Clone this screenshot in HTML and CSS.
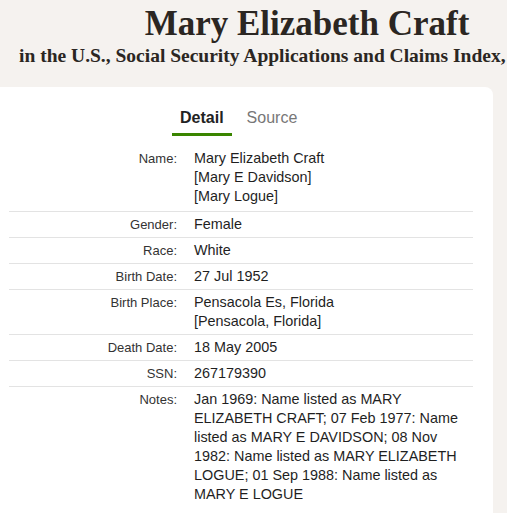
FILE: index.html
```html
<!DOCTYPE html>
<html>
<head>
<meta charset="utf-8">
<link rel="stylesheet" href="styles.css">
</head>
<body>
<div class="page">
  <header class="header">
    <h1 class="title">Mary Elizabeth Craft</h1>
    <p class="subtitle">in the U.S., Social Security Applications and Claims Index, 1936-2007</p>
  </header>
  <main class="card">
    <nav class="tabs">
      <span class="tab active">Detail</span>
      <span class="tab">Source</span>
    </nav>
    <table class="facts">
      <tr class="first"><th>Name:</th><td>Mary Elizabeth Craft<br>[Mary E Davidson]<br>[Mary Logue]</td></tr>
      <tr><th>Gender:</th><td>Female</td></tr>
      <tr><th>Race:</th><td>White</td></tr>
      <tr><th>Birth Date:</th><td>27 Jul 1952</td></tr>
      <tr><th>Birth Place:</th><td>Pensacola Es, Florida<br>[Pensacola, Florida]</td></tr>
      <tr><th>Death Date:</th><td>18 May 2005</td></tr>
      <tr><th>SSN:</th><td>267179390</td></tr>
      <tr><th>Notes:</th><td>Jan 1969: Name listed as MARY ELIZABETH CRAFT; 07 Feb 1977: Name listed as MARY E DAVIDSON; 08 Nov 1982: Name listed as MARY ELIZABETH LOGUE; 01 Sep 1988: Name listed as MARY E LOGUE</td></tr>
    </table>
  </main>
</div>
</body>
</html>
```
FILE: styles.css
```css
html, body {
  margin: 0;
  padding: 0;
  background: #f5f2ef;
  overflow: hidden;
}
.page {
  width: 507px;
  height: 513px;
  overflow: hidden;
}
.header {
  width: 614px;
  text-align: center;
  white-space: nowrap;
  color: #2b2622;
  font-family: "Liberation Serif", serif;
  padding-top: 4px;
}
.title {
  margin: 0;
  font-size: 35px;
  font-weight: bold;
  line-height: 40px;
}
.subtitle {
  margin: 0;
  font-size: 19.5px;
  font-weight: bold;
  line-height: 24px;
}
.card {
  margin-top: 19px;
  width: 493px;
  background: #fff;
  border-top-right-radius: 8px;
  font-family: "Liberation Sans", Arial, sans-serif;
  color: #1f1f1f;
  padding-top: 8px;
  height: 420px;
}
.tabs {
  display: flex;
  gap: 7px;
  margin-left: 172px;
}
.tab {
  font-size: 16px;
  line-height: 20px;
  padding: 13px 8px 5px;
  color: #777;
}
.tab.active {
  font-weight: bold;
  color: #222;
  border-bottom: 3px solid #3a8500;
}
.facts {
  margin-left: 9px;
  width: 464px;
  border-collapse: collapse;
  margin-top: 10px;
}
.facts tr + tr {
  border-top: 1px solid #e3e3e3;
}
.facts th {
  width: 168px;
  text-align: right;
  font-weight: normal;
  font-size: 13px;
  color: #333;
  vertical-align: baseline;
  padding: 3px 17px 3px 0;
  line-height: 17px;
}
.facts td {
  vertical-align: baseline;
  font-size: 14.4px;
  line-height: 19px;
  padding: 3px 0 3px;
}
.facts tr.first td {
  padding-bottom: 5px;
}
```
